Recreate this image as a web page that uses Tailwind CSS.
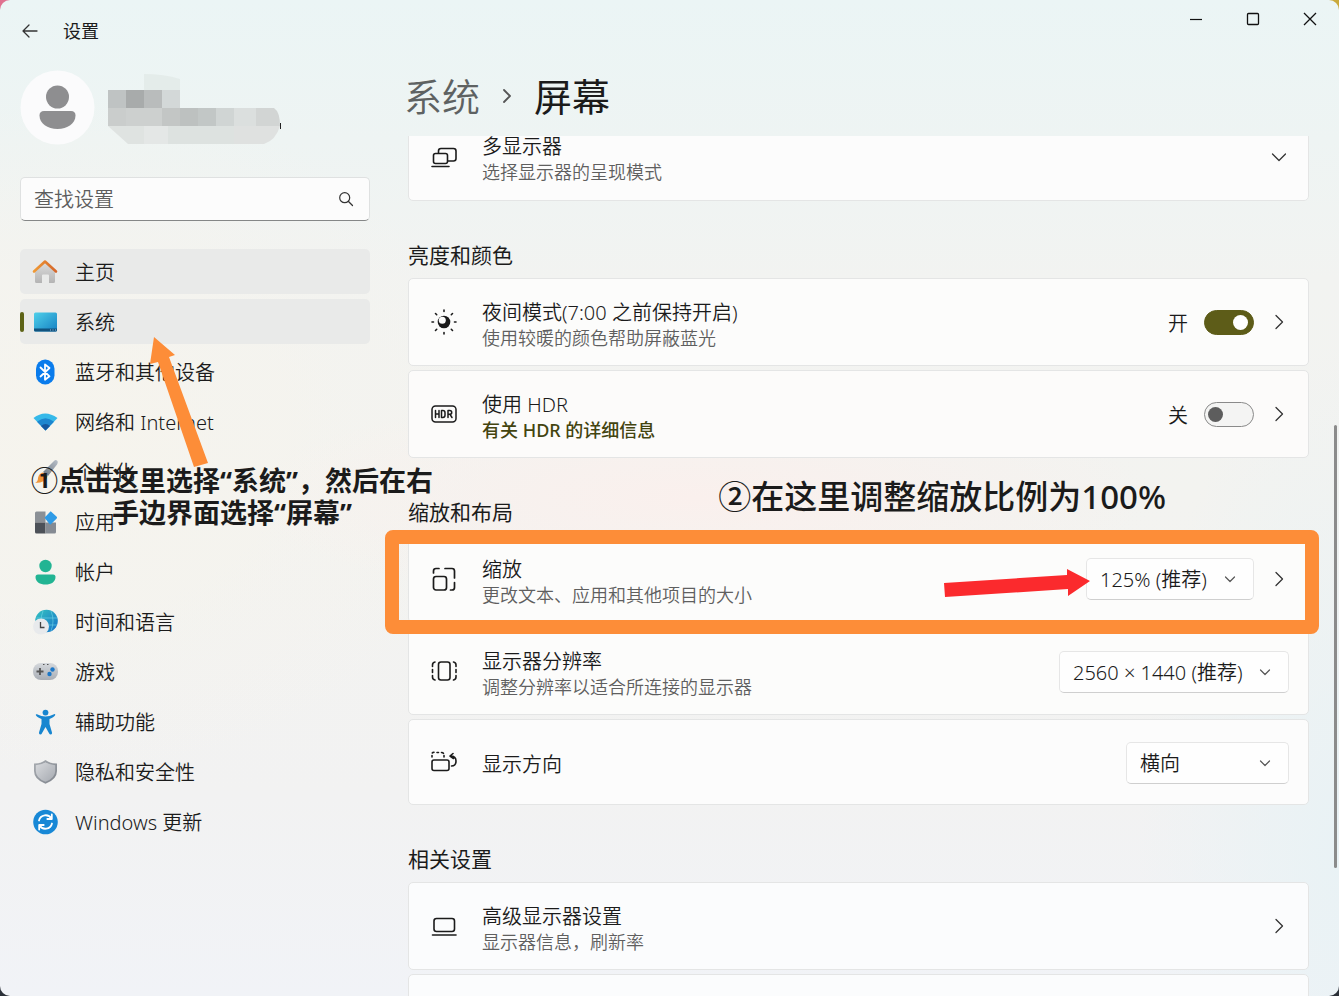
<!DOCTYPE html>
<html lang="zh-CN">
<head>
<meta charset="utf-8">
<meta name="viewport" content="width=device-width, initial-scale=1">
<title>设置</title>
<script src="https://cdn.jsdelivr.net/npm/@tailwindcss/browser@4"></script>
</head>
<body class="h-screen overflow-hidden bg-[linear-gradient(0deg,#2b3038_50%,#2b303800_50%),linear-gradient(90deg,#e0708f,#d8dcdc_20%,#d8dcdc_80%,#c9a93a)] font-['Noto_Sans','Noto_Sans_CJK_SC',sans-serif] text-[20px] leading-[26px] text-[#1b1b1b]">
<div class="relative flex h-full flex-col overflow-hidden rounded-[10px] bg-[radial-gradient(ellipse_460px_110px_at_52%_50%,#faf0ed,#faf0ed00),radial-gradient(ellipse_420px_340px_at_6%_44%,#f6f4ed,#f6f4ed00),radial-gradient(ellipse_200px_500px_at_100%_85%,#e9f2f5,#e9f2f500),linear-gradient(180deg,#ebf5f5_0%,#eef4f3_14%,#f2f3f1_28%,#f3f3f0_50%,#f2f2f2_80%,#f1f3f7_100%)]">

  <header class="flex h-[62px] shrink-0 items-start justify-between">
    <div class="flex h-[62px] items-center gap-6 pl-[21px]">
      <button type="button" aria-label="返回" class="block">
        <svg class="size-[18px]" viewBox="0 0 18 18" fill="none" stroke="#333" stroke-width="1.3" stroke-linecap="round" stroke-linejoin="round"><path d="M16 9H2M8 3 2 9l6 6"/></svg>
      </button>
      <h1 class="text-[18px]">设置</h1>
    </div>
    <div class="flex h-[38px] items-center">
      <button type="button" aria-label="最小化" class="flex h-full w-[57px] items-center justify-center"><svg class="size-[14px]" viewBox="0 0 14 14" stroke="#111" stroke-width="1.2"><path d="M1 7.500h12"/></svg></button>
      <button type="button" aria-label="最大化" class="flex h-full w-[57px] items-center justify-center"><svg class="size-[14px]" viewBox="0 0 14 14" fill="none" stroke="#111" stroke-width="1.3"><rect x="1.500" y="1.500" width="11" height="11" rx="1"/></svg></button>
      <button type="button" aria-label="关闭" class="flex h-full w-[58px] items-center justify-center"><svg class="size-[14px]" viewBox="0 0 14 14" stroke="#111" stroke-width="1.3"><path d="m1 1 12 12M13 1 1 13"/></svg></button>
    </div>
  </header>

  <div class="flex min-h-0 flex-1">
    <aside class="w-[370px] shrink-0 pl-5">
      <div class="mt-2 flex items-center gap-[13px]">
        <svg class="size-[75px]" viewBox="0 0 75 75"><circle cx="37.500" cy="37.500" r="37" fill="#fbfbfc"/><circle cx="37.500" cy="27" r="11.500" fill="#8e8e90"/><path d="M24 41h27q4.500 0 4.500 4.500c0 8-8 13.500-18 13.500s-18-5.500-18-13.500Q19.500 41 24 41z" fill="#8e8e90"/></svg>
        <svg class="h-[75px] w-[174px]" viewBox="0 -2 174 75">
          <path d="M36 2q20 0 36 5v11H36z" fill="#e4ecea"/>
          <path d="M0 18h18v18H0z" fill="#bfc3c3"/><path d="M18 18h18v18H18z" fill="#a8abab"/><path d="M36 18h18v18H36z" fill="#b9bcbc"/><path d="M54 18h18v18H54z" fill="#d3d8d8"/>
          <path d="M0 36h18v18H0z" fill="#cacdcc"/><path d="M18 36h36v18H18z" fill="#cdd0cf"/><path d="M54 36h18v18H54z" fill="#c3c6c5"/><path d="M72 36h18v18H72z" fill="#bdc1c0"/><path d="M90 36h18v18H90z" fill="#c2c7c6"/><path d="M108 36h18v18h-18z" fill="#d0d5d4"/><path d="M126 36h22v18h-22z" fill="#dbdfde"/><path d="M148 36h18q6 4 6 18h-24z" fill="#d2d5d4"/>
          <path d="M0 54h36v18H20z" fill="#dfe3e1"/><path d="M36 54h24v18H36z" fill="#e4e7e6"/><path d="M60 54h66v18H60z" fill="#dde2e0"/><path d="M126 54h46q-4 14-16 18h-30z" fill="#dfe1e0"/>
          <path d="M172 51h1v6h-1z" fill="#222"/>
        </svg>
      </div>

      <label class="mt-8 flex h-11 items-center rounded-[5px] border border-[#dfe1e1] border-b-[#858787] bg-[#fcfcfc] pr-[15px] pl-[13px]">
        <input type="text" aria-label="查找设置" placeholder="查找设置" class="min-w-0 flex-1 bg-transparent pt-0.5 font-[350] outline-none placeholder:text-[#5d5d5d]">
        <svg class="size-4" viewBox="0 0 16 16" fill="none" stroke="#333" stroke-width="1.2" stroke-linecap="round"><circle cx="6.700" cy="6.700" r="5"/><path d="m10.500 10.500 4 4"/></svg>
      </label>

      <nav class="mt-7 flex flex-col gap-[5px] font-[350]">
        <a href="#" class="flex h-[45px] items-center gap-[17px] rounded-[5px] bg-[#e9eae9] pl-3">
          <svg class="size-[26px]" viewBox="0 0 26 26"><defs><linearGradient id="h1" x2="0" y2="1"><stop stop-color="#ddd"/><stop offset="1" stop-color="#b4b4b4"/></linearGradient><linearGradient id="h2" x2="1"><stop stop-color="#f09a35"/><stop offset="1" stop-color="#d5662a"/></linearGradient></defs><path d="M3 12 13 3l10 9v10.500q0 1.500-1.500 1.500H17v-7.500q0-1-1-1h-5q-1 0-1 1V24H4.500Q3 24 3 22.500z" fill="url(#h1)"/><path d="m2 12.500 11-10 11 10" fill="none" stroke="url(#h2)" stroke-width="2.600" stroke-linecap="round" stroke-linejoin="round"/></svg>
          <span class="pt-[3px]">主页</span></a>
        <a href="#" aria-current="page" class="flex h-[45px] items-center rounded-[5px] bg-[#e9eae9]">
          <i class="h-5 w-1 rounded-full bg-[#5d6316]"></i>
          <svg class="mr-[17px] ml-2 size-[26px]" viewBox="0 0 26 26"><defs><linearGradient id="s1" x2="1" y2="1"><stop stop-color="#4fd0ea"/><stop offset="1" stop-color="#1580c2"/></linearGradient></defs><rect x="2" y="3.500" width="23" height="19" rx="1.500" fill="url(#s1)"/><path d="M2 19.500h23V21q0 1.500-1.500 1.500h-20Q2 22.500 2 21z" fill="#11537e"/><path d="M18 20.500h1v1h-1zM20.500 20.500h1v1h-1zM23 20.500h1v1h-1z" fill="#9bd"/></svg>
          <span class="pt-[3px]">系统</span></a>
        <a href="#" class="flex h-[45px] items-center gap-[17px] pl-3">
          <svg class="size-[26px]" viewBox="0 0 26 26"><rect x="4" y=".5" width="18.500" height="25" rx="9.200" fill="#0a7cec"/><path d="m8.500 8.500 9 8.800-4.500 3.500V5.500l4.500 3.500-9 8.500" fill="none" stroke="#fff" stroke-width="1.800" stroke-linejoin="round" stroke-linecap="round"/></svg>
          <span class="pt-[3px]">蓝牙和其他设备</span></a>
        <a href="#" class="flex h-[45px] items-center gap-[17px] pl-3">
          <svg class="size-[26px]" viewBox="0 0 26 26"><path d="M1.500 9q11.500-9 24 0L13.500 21.500z" fill="#36b9e9"/><path d="M5 12.700q8.500-7 17 0l-8.500 8.800z" fill="#1d86cf"/><path d="M9 17q4.500-4 9 0l-4.500 4.500z" fill="#16589f"/></svg>
          <span class="pt-[3px]">网络和 Internet</span></a>
        <a href="#" class="flex h-[45px] items-center gap-[17px] pl-3">
          <svg class="size-[26px]" viewBox="0 0 26 26"><defs><linearGradient id="b1" x1="1" x2="0" y2="1"><stop stop-color="#b9c0c9"/><stop offset="1" stop-color="#6c757f"/></linearGradient></defs><path d="M25 1.500q1.500 1 0 4L16 17l-5-4L22 2q1.500-1.500 3-.5z" fill="url(#b1)"/><path d="M11 13.500 15.500 17q-1 7-12.500 7 3-1.500 3-5 1-5 5-5.500z" fill="#f0973a"/></svg>
          <span class="pt-[3px]">个性化</span></a>
        <a href="#" class="flex h-[45px] items-center gap-[17px] pl-3">
          <svg class="size-[26px]" viewBox="0 0 26 26"><path d="M4.500 2.500H13.500V13.500H3V4q0-1.500 1.500-1.500z" fill="#8b9096"/><path d="M3 13.500h10.500v11h-9Q3 24.500 3 23z" fill="#4c5158"/><path d="M13.500 13.500H24V23q0 1.500-1.500 1.500h-9z" fill="#858b93"/><path d="m18.700 2.200 6 5.600q.8.800 0 1.600l-5.600 5.600q-.8.800-1.600 0l-4.400-5.500q-.8-.8 0-1.600z" fill="#2f9be6"/></svg>
          <span class="pt-[3px]">应用</span></a>
        <a href="#" class="flex h-[45px] items-center gap-[17px] pl-3">
          <svg class="size-[26px]" viewBox="0 0 26 26"><g fill="#22b493"><circle cx="13.500" cy="7" r="6.200"/><path d="M6 15.500h15q2.500 0 2.500 2.500c0 5-4.500 7.500-10 7.500S3.500 23 3.500 18q0-2.500 2.500-2.500z"/></g></svg>
          <span class="pt-[3px]">帐户</span></a>
        <a href="#" class="flex h-[45px] items-center gap-[17px] pl-3">
          <svg class="size-[26px]" viewBox="0 0 26 26"><defs><linearGradient id="g1" x2="1" y2="1"><stop stop-color="#35c3c0"/><stop offset="1" stop-color="#1772c9"/></linearGradient></defs><circle cx="14.500" cy="12" r="11.300" fill="url(#g1)"/><path d="M4.500 9h21M5 16h20M11 2q-4 10 0 20M19 2q4 10 0 20" fill="none" stroke="#6fd5ea" stroke-opacity=".6"/><circle cx="9" cy="17.500" r="8" fill="#e8eaec"/><path d="M8.500 13v5.500h4" fill="none" stroke="#444" stroke-width="1.300"/></svg>
          <span class="pt-[3px]">时间和语言</span></a>
        <a href="#" class="flex h-[45px] items-center gap-[17px] pl-3">
          <svg class="size-[26px]" viewBox="0 0 26 26"><defs><linearGradient id="p1" x2="0" y2="1"><stop stop-color="#d5d8dc"/><stop offset="1" stop-color="#a9aeb5"/></linearGradient></defs><rect x="1" y="4" width="25" height="17" rx="8" fill="url(#p1)"/><path d="M8 9v7M4.500 12.500h7" stroke="#555" stroke-width="1.800"/><path d="M11 5.500h1.500M15 5.500h1.500" stroke="#555" stroke-width="1.200"/><circle cx="20.500" cy="10.500" r="2.200" fill="#1d78c8"/><circle cx="17.500" cy="15" r="2.200" fill="#1d78c8"/></svg>
          <span class="pt-[3px]">游戏</span></a>
        <a href="#" class="flex h-[45px] items-center gap-[17px] pl-3">
          <svg class="size-[26px]" viewBox="0 0 26 26"><g fill="#1886d0"><circle cx="13.500" cy="3.600" r="2.900"/><path d="M5 5.300q-1.600-.5-1.100 1T9.500 10v5L7 23.500q-.2 2 1.200 2t1.900-1.500L13.500 18l3.400 6q.6 1.500 2 1.500t1.100-2L17.500 15v-5q5-2 5.600-3.700t-1.100-1Q17.500 7.500 13.500 7.500T5 5.300z"/></g></svg>
          <span class="pt-[3px]">辅助功能</span></a>
        <a href="#" class="flex h-[45px] items-center gap-[17px] pl-3">
          <svg class="size-[26px]" viewBox="0 0 26 26"><defs><linearGradient id="d1" x2="1" y2="1"><stop stop-color="#a9adb2"/><stop offset="1" stop-color="#7e838b"/></linearGradient><linearGradient id="d2" x2="1" y2="1"><stop stop-color="#d8dadd"/><stop offset="1" stop-color="#a5a9b0"/></linearGradient></defs><path d="M13.500 1Q18 4.500 25 4.500V12q0 8.500-11.500 12.800Q2 20.500 2 12V4.500q7 0 11.500-3.500z" fill="url(#d1)"/><path d="M13.500 3.300Q17.500 6 23.200 6.200V12q0 7-9.700 10.800Q3.800 19 3.800 12V6.200q5.700-.2 9.700-2.900z" fill="url(#d2)"/></svg>
          <span class="pt-[3px]">隐私和安全性</span></a>
        <a href="#" class="flex h-[45px] items-center gap-[17px] pl-3">
          <svg class="size-[26px]" viewBox="0 0 26 26"><circle cx="13.500" cy="13" r="12.300" fill="#1888d6"/><g fill="none" stroke="#fff" stroke-width="1.800" stroke-linecap="round" stroke-linejoin="round"><path d="M7 11.500a6.800 6.800 0 0 1 12.500-1.800M19.800 5.500v4.500h-4.500M20 14.500A6.800 6.800 0 0 1 7.500 16.300M7.200 20.500V16h4.500"/></g></svg>
          <span class="pt-[3px]">Windows 更新</span></a>
      </nav>
    </aside>

    <main class="flex min-w-0 flex-1 flex-col">
      <h2 class="flex h-[74px] shrink-0 items-center gap-[19px] pb-[7px] pl-[34px] text-[38px] leading-[66px] font-[350]">
        <a href="#" class="text-[#5e6262]">系统</a>
        <svg class="size-4" viewBox="0 0 16 16" fill="none" stroke="#555" stroke-width="1.800" stroke-linecap="round" stroke-linejoin="round"><path d="m5 2 6 6-6 6"/></svg>
        <span class="font-normal">屏幕</span>
      </h2>

      <div class="min-h-0 flex-1 overflow-hidden pr-[30px] pl-[38px]">
        <section class="-mt-6 flex h-[89px] items-center rounded-[5px] border border-[#e4e5e5] bg-[#fcfcfc] pr-[19px] pl-[22px]">
          <svg class="size-[26px]" viewBox="0 0 26 26" fill="none" stroke="#1b1b1b" stroke-width="1.600" stroke-linecap="round" stroke-linejoin="round"><rect x="2.500" y="9.500" width="14" height="10" rx="2"/><path d="M1 22.500h17M7.500 9V7q0-2.500 2.500-2.500h12.500Q25 4.500 25 7v7.500q0 2.500-2.500 2.500H17"/></svg>
          <div class="ml-[25px] flex-1 pt-[5px] font-[350]"><h3>多显示器</h3><p class="text-[18px] leading-[24px] text-[#5f5f5f]">选择显示器的呈现模式</p></div>
          <button type="button" aria-label="展开多显示器" class="block"><svg class="size-5" viewBox="0 0 20 20" fill="none" stroke="#333" stroke-width="1.300" stroke-linecap="round" stroke-linejoin="round"><path d="m3.500 7 6.500 6.500L16.500 7"/></svg></button>
        </section>

        <h3 class="mt-[41px] text-[21px] leading-[26px]">亮度和颜色</h3>
        <section class="mt-[10px] flex h-[88px] items-center rounded-[5px] border border-[#e4e5e5] bg-[#fcfcfb] pr-[19px] pl-[22px]">
          <svg class="size-[26px]" viewBox="0 0 26 26"><circle cx="13" cy="13" r="6.300" fill="#1b1b1b"/><circle cx="11.300" cy="11.300" r="3.500" fill="#fcfcfb"/><path d="M13 1v1.500M13 23.500V25M1 13h1.500M23.500 13H25M4.500 4.500l1.200 1.200M20.300 20.300l1.200 1.200M4.500 21.500l1.200-1.200M20.300 5.700l1.200-1.200" stroke="#1b1b1b" stroke-width="1.600" stroke-linecap="round"/></svg>
          <div class="ml-[25px] flex-1 pt-[5px] font-[350]"><h4>夜间模式(7:00 之前保持开启)</h4><p class="text-[18px] leading-[24px] text-[#5f5f5f]">使用较暖的颜色帮助屏蔽蓝光</p></div>
          <label class="flex items-center gap-4 font-[350]"><span class="pt-[3px]">开</span><input type="checkbox" role="switch" aria-label="夜间模式" checked class="flex h-[25px] w-[50px] appearance-none items-center rounded-full border border-[#8a8a8a] bg-[#f4f4f3] px-[3px] before:block before:size-[15px] before:rounded-full before:bg-[#5d5d5d] before:content-[''] checked:justify-end checked:border-[#5d5c18] checked:bg-[#5d5c18] checked:px-[5px] checked:before:bg-white"></label>
          <button type="button" aria-label="夜间模式详情" class="ml-[15px] block"><svg class="size-5" viewBox="0 0 20 20" fill="none" stroke="#333" stroke-width="1.300" stroke-linecap="round" stroke-linejoin="round"><path d="m7 3.500 6.500 6.500L7 16.500"/></svg></button>
        </section>

        <section class="mt-1 flex h-[88px] items-center rounded-[5px] border border-[#e4e5e5] bg-[#fcfbfa] pr-[19px] pl-[22px]">
          <svg class="size-[26px]" viewBox="0 0 26 26" fill="none" stroke="#1b1b1b" stroke-linecap="round" stroke-linejoin="round"><rect x="1" y="5" width="24" height="16" rx="3.500" stroke-width="1.500"/><path d="M4.500 9.500v7M8 9.500v7M4.500 13H8M10.500 9.500v7h1.300q2.200 0 2.200-2.200v-2.600q0-2.200-2.200-2.200zM17 16.500v-7h1.700q2 0 2 1.900t-2 1.900H17m2 0 2 3.200" stroke-width="1.500"/></svg>
          <div class="ml-[25px] flex-1 pt-[5px] font-[350]"><h4>使用 HDR</h4><a href="#" class="block text-[18px] leading-[24px] font-medium text-[#43440f]">有关 HDR 的详细信息</a></div>
          <label class="flex items-center gap-4 font-[350]"><span class="pt-[3px]">关</span><input type="checkbox" role="switch" aria-label="使用 HDR" class="flex h-[25px] w-[50px] appearance-none items-center rounded-full border border-[#8a8a8a] bg-[#f4f4f3] px-[3px] before:block before:size-[15px] before:rounded-full before:bg-[#5d5d5d] before:content-[''] checked:justify-end checked:border-[#5d5c18] checked:bg-[#5d5c18] checked:px-[5px] checked:before:bg-white"></label>
          <button type="button" aria-label="HDR 详情" class="ml-[15px] block"><svg class="size-5" viewBox="0 0 20 20" fill="none" stroke="#333" stroke-width="1.300" stroke-linecap="round" stroke-linejoin="round"><path d="m7 3.500 6.500 6.500L7 16.500"/></svg></button>
        </section>

        <h3 class="mt-[41px] text-[21px] leading-[26px]">缩放和布局</h3>
        <section class="relative mt-[10px] flex h-[88px] items-center rounded-[5px] border border-[#e4e5e5] bg-[#fcfcfb] pr-[19px] pl-[22px]">
          <svg class="size-[26px]" viewBox="0 0 26 26" fill="none" stroke="#1b1b1b" stroke-width="1.700" stroke-linecap="round"><rect x="2.500" y="10.500" width="13" height="13.500" rx="2.500"/><path d="M2.500 7V5Q2.500 2.500 5 2.500h3M14 2.500h7Q23.500 2.500 23.500 5v7M23.500 16.500v5q0 2.500-2.500 2.500h-1.500"/></svg>
          <div class="ml-[25px] flex-1 pt-[5px] font-[350]"><h4>缩放</h4><p class="text-[18px] leading-[24px] text-[#5f5f5f]">更改文本、应用和其他项目的大小</p></div>
          <div class="relative flex items-center">
            <select aria-label="缩放" class="h-[42px] w-[168px] appearance-none rounded-[5px] border border-[#e6e6e6] border-b-[#cfcfcf] bg-[#fefefe] pt-0.5 pl-[13px] font-[350]"><option>125% (推荐)</option></select>
            <svg class="pointer-events-none absolute right-[18px] size-3" viewBox="0 0 12 12" fill="none" stroke="#555" stroke-width="1.200" stroke-linecap="round" stroke-linejoin="round"><path d="m1.500 4 4.500 4.500L10.500 4"/></svg>
          </div>
          <button type="button" aria-label="缩放详情" class="ml-[15px] block"><svg class="size-5" viewBox="0 0 20 20" fill="none" stroke="#333" stroke-width="1.300" stroke-linecap="round" stroke-linejoin="round"><path d="m7 3.500 6.500 6.500L7 16.500"/></svg></button>

          <div class="pointer-events-none absolute -top-1.5 -right-[11px] -bottom-3 -left-6 z-10 rounded-[8px] border-14 border-[#fd8d38]"></div>
          <svg class="pointer-events-none absolute top-[32px] right-[217px] z-10 h-[30px] w-[148px]" viewBox="0 0 148 30" fill="#fb2a2d"><path d="m1 15 123-8V1l23 12-22 15v-7L2 29z"/></svg>
          <p class="pointer-events-none absolute right-[142px] bottom-[102px] z-10 text-[33px] leading-[46px] font-medium whitespace-nowrap">②在这里调整缩放比例为100%</p>
        </section>

        <section class="mt-1 flex h-[88px] items-center rounded-[5px] border border-[#e4e5e5] bg-[#fcfcfb] pr-[19px] pl-[22px]">
          <svg class="size-[26px]" viewBox="0 0 26 26" fill="none" stroke="#1b1b1b" stroke-width="1.600" stroke-linecap="round"><rect x="7.500" y="4" width="11.500" height="18" rx="2.500"/><path d="M4 4q-2.500.3-2.500 3v1.500M1.500 11.500v3M1.500 17.500V19q0 2.500 2.500 3M22.500 4Q25 4.300 25 7v1.500M25 11.500v3M25 17.500V19q0 2.500-2.500 3"/></svg>
          <div class="ml-[25px] flex-1 pt-[5px] font-[350]"><h4>显示器分辨率</h4><p class="text-[18px] leading-[24px] text-[#5f5f5f]">调整分辨率以适合所连接的显示器</p></div>
          <div class="relative flex items-center pt-0.5">
            <select aria-label="显示器分辨率" class="h-[42px] w-[230px] appearance-none rounded-[5px] border border-[#e6e6e6] border-b-[#cfcfcf] bg-[#fefefe] pt-0.5 pl-[13px] font-[350]"><option>2560 × 1440 (推荐)</option></select>
            <svg class="pointer-events-none absolute right-[18px] size-3" viewBox="0 0 12 12" fill="none" stroke="#555" stroke-width="1.200" stroke-linecap="round" stroke-linejoin="round"><path d="m1.500 4 4.500 4.500L10.500 4"/></svg>
          </div>
        </section>

        <section class="mt-1 flex h-[86px] items-center rounded-[5px] border border-[#e4e5e5] bg-[#fcfcfc] pr-[19px] pl-[22px]">
          <svg class="size-[26px]" viewBox="0 0 26 26" fill="none" stroke="#1b1b1b" stroke-width="1.600" stroke-linecap="round" stroke-linejoin="round"><rect x="1" y="11" width="17" height="10.500" rx="2"/><path d="M1 8V6.500M1.300 4q.4-.7 1.700-.8M6 3.500h1.500M10.500 3.500q1.500 0 2 .8M13 6.500V8M22 4.500l-3 2.500 3.500 2.500M19.500 7Q25 7 25 12t-4.500 5"/></svg>
          <h4 class="ml-[25px] flex-1 pt-[5px] font-[350]">显示方向</h4>
          <div class="relative flex items-center pt-0.5">
            <select aria-label="显示方向" class="h-[42px] w-[163px] appearance-none rounded-[5px] border border-[#e6e6e6] border-b-[#cfcfcf] bg-[#fefefe] pt-0.5 pl-[13px] font-[350]"><option>横向</option></select>
            <svg class="pointer-events-none absolute right-[18px] size-3" viewBox="0 0 12 12" fill="none" stroke="#555" stroke-width="1.200" stroke-linecap="round" stroke-linejoin="round"><path d="m1.500 4 4.500 4.500L10.500 4"/></svg>
          </div>
        </section>

        <h3 class="mt-[41px] text-[21px] leading-[26px]">相关设置</h3>
        <section class="mt-[10px] flex h-[88px] items-center rounded-[5px] border border-[#e4e5e5] bg-[#fbfcfd] pr-[19px] pl-[22px]">
          <svg class="size-[26px]" viewBox="0 0 26 26" fill="none" stroke="#1b1b1b" stroke-width="1.600" stroke-linecap="round"><rect x="3" y="5.500" width="20.500" height="13" rx="2.500"/><path d="M1.500 22h23.500"/></svg>
          <div class="ml-[25px] flex-1 pt-[5px] font-[350]"><h4>高级显示器设置</h4><p class="text-[18px] leading-[24px] text-[#5f5f5f]">显示器信息，刷新率</p></div>
          <button type="button" aria-label="高级显示器设置详情" class="block"><svg class="size-5" viewBox="0 0 20 20" fill="none" stroke="#333" stroke-width="1.300" stroke-linecap="round" stroke-linejoin="round"><path d="m7 3.500 6.500 6.500L7 16.500"/></svg></button>
        </section>
        <section class="mt-1 h-[88px] rounded-[5px] border border-[#e4e5e5] bg-[#fbfcfd]"></section>
      </div>
    </main>
  </div>

  <div class="absolute top-[425px] right-0.5 h-[443px] w-[3px] rounded-full bg-[#8b8b8b]"></div>

  <svg class="pointer-events-none absolute top-[336px] left-[148px] h-[134px] w-[62px]" viewBox="0 0 62 134" fill="#fd8d38"><path d="m6 1 21 18-6 2 39 106-14 4L10 26l-8 2z"/></svg>
  <p class="pointer-events-none absolute top-[465px] left-[31px] text-center text-[27px] leading-[32px] font-bold whitespace-nowrap">①点击这里选择“系统”，然后在右<br>手边界面选择“屏幕”</p>
</div>
</body>
</html>
